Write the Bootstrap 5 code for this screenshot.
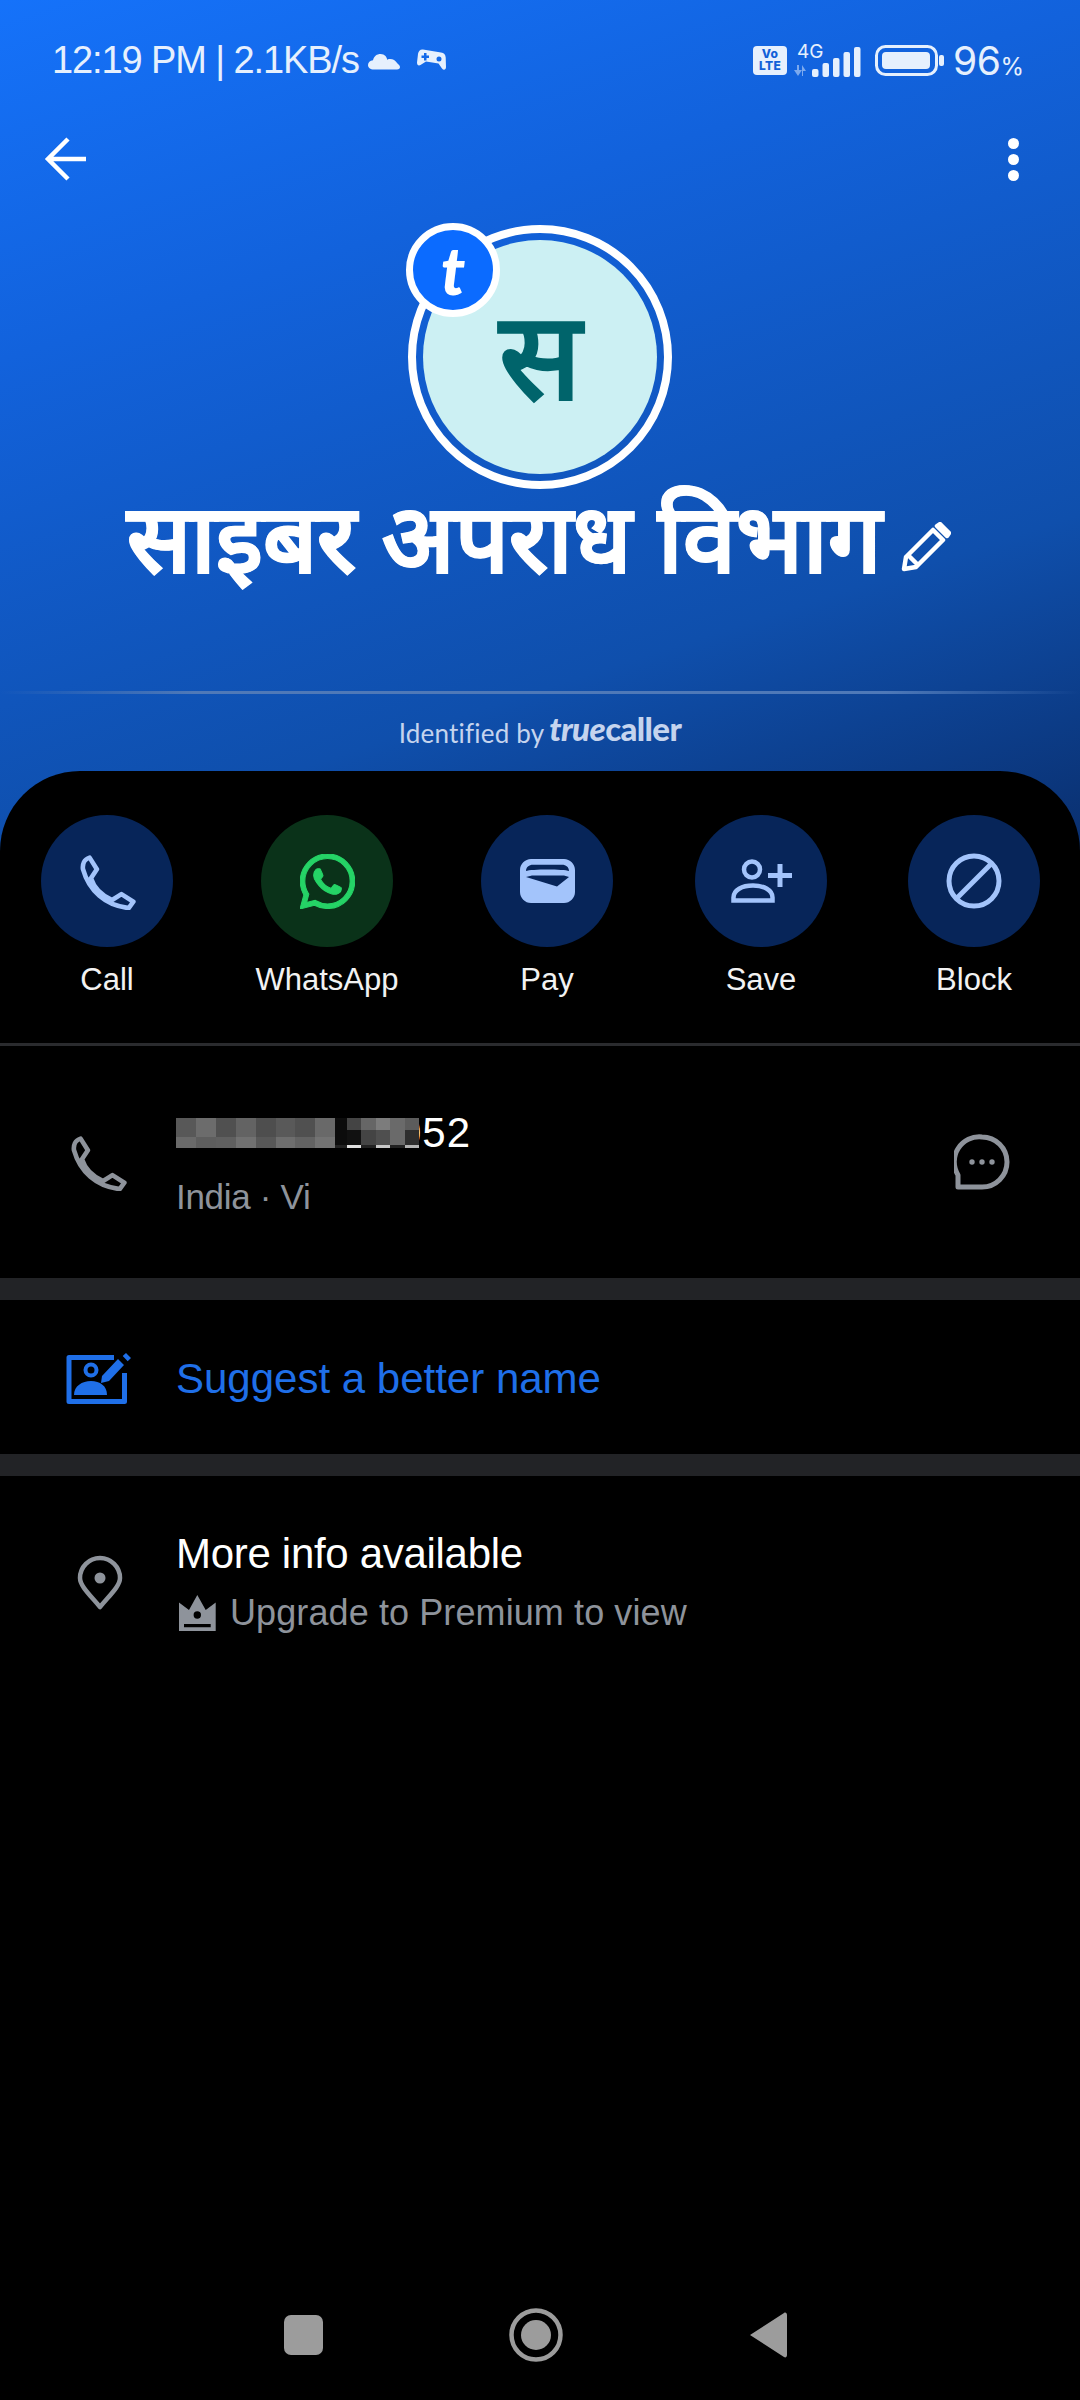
<!DOCTYPE html>
<html lang="en">
<head>
  <meta charset="UTF-8" />
  <meta name="viewport" content="width=device-width, initial-scale=1" />
  <title>Caller details</title>
  <link href="https://cdn.jsdelivr.net/npm/bootstrap@5.3.0/dist/css/bootstrap.min.css" rel="stylesheet" />
  <style>
    body {
      margin: 0;
      width: 1080px;
      height: 2400px;
      background: #000;
      color: #fff;
      font-family: "Liberation Sans", Arial, sans-serif;
      overflow: hidden;
    }

    .hero {
      height: 851px;
      background: linear-gradient(162deg, #1572fa 0%, #1262dc 30%, #0f4fac 72%, #0a2f6e 100%);
    }

    .status-bar {
      height: 120px;
      padding: 0 56px 0 52px;
      color: #e6f0fd;
    }

    .status-time { font-size: 38px; letter-spacing: -1.1px; line-height: 1; }
    .status-batt { font: 39px/1 Inter, sans-serif; letter-spacing: -.5px; }
    .status-batt span { font-size: 24px; letter-spacing: 0; }

    .volte {
      width: 34px;
      height: 29px;
      border-radius: 4px;
      background: #e6f0fd;
      color: #1260d8;
      font-family: Inter, sans-serif;
      font-size: 12px;
      font-weight: 800;
      line-height: 12.5px;
      text-align: center;
      padding-top: 2px;
      letter-spacing: .3px;
    }

    .net-box { width: 68px; height: 29px; margin-left: 6px; }
    .net-4g { font: 19px/1 Inter, sans-serif; position: absolute; left: 4px; top: -4px; }
    .batt-icon { margin-left: 14px; }

    .tool-bar { height: 78px; padding: 0 61px 0 44px; }
    .more-dots i { display: block; width: 11px; height: 11px; border-radius: 50%; background: #fff; margin: 5px 0; }

    .avatar-ring {
      position: relative;
      width: 264px;
      height: 264px;
      margin: 27px auto 0;
      border: 8px solid #fff;
      border-radius: 50%;
      padding: 7px;
    }

    .avatar-fill {
      width: 100%;
      height: 100%;
      border-radius: 50%;
      background: #ccf0f3;
      color: #00646b;
      font-size: 122px;
      font-weight: 700;
      line-height: 1;
    }

    .tc-badge {
      position: absolute;
      left: -10px;
      top: -10px;
      width: 94px;
      height: 94px;
      border: 7px solid #fff;
      border-radius: 50%;
      background: #0b6bff;
      font: italic 900 66px/1 Lato, sans-serif;
    }

    .name-row { height: 101px; padding-left: 127px; }
    .name-text { font-size: 95px; font-weight: 700; line-height: 1; -webkit-text-stroke: 1px #fff; }
    .name-pen { margin: 14px 0 0 20px; }

    .hero-rule {
      height: 3px;
      margin-top: 101px;
      background: linear-gradient(90deg, transparent, #4f79b8 18%, #4f79b8 82%, transparent);
    }

    .identified { height: 78px; color: #c5d4ee; font: 26px Lato, sans-serif; letter-spacing: .2px; }
    .tc-logo { font-size: 33px; font-weight: 900; letter-spacing: -.6px; margin-left: 5px; line-height: 1; position: relative; top: -5px; }
    .tc-logo em { font-style: italic; }

    .sheet {
      position: relative;
      margin-top: -80px;
      background: #000;
      border-radius: 80px 80px 0 0;
    }

    .action-grid {
      display: grid;
      grid-template-columns: 220px 220px 214px 213px 132px;
      padding: 44px 0 0 41px;
      height: 275px;
      border-bottom: 3px solid #2a2b2e;
    }

    .act-circle { width: 132px; height: 132px; border-radius: 50%; background: #072559; }
    .act-circle.green { background: #0a3219; }
    .act-label { width: 172px; margin: 13px 0 0 -20px; text-align: center; font-size: 31px; line-height: 40px; color: #f2f2f2; }

    .row-icon { width: 176px; flex: none; padding-left: 66px; }
    .phone-row { height: 232px; padding: 0 70px 0 0; }
    .phone-text { padding-top: 5px; }
    .main-line { font-size: 42px; line-height: 48px; }
    .sub-line { font-size: 36px; line-height: 44px; color: #8e939b; }
    .carrier-line { font-size: 35px; letter-spacing: -.3px; }
    .num-line { height: 46px; margin-bottom: 19px; }
    .num-mask { position: relative; z-index: 1; }
    .num-end { margin-left: -21px; font-size: 42px; line-height: 46px; letter-spacing: 1px; }

    .band { height: 22px; background: #222326; }
    .suggest-row { height: 154px; padding-top: 4px; }
    .suggest-text { color: #1f6fe8; }
    .info-row { padding-top: 54px; }
    .info-title { letter-spacing: -.3px; }
    .pin-icon { margin-left: 11px; }
    .upgrade-line { margin-top: 13px; letter-spacing: .1px; }
    .crown-icon { margin: 0 14px 0 3px; }

    .nav-keys { position: absolute; left: 0; right: 0; top: 2308px; height: 54px; }
  </style>
</head>
<body>
  <div class="hero">
    <!-- status bar -->
    <div class="status-bar d-flex align-items-center justify-content-between">
      <div class="d-flex align-items-center">
        <span class="status-time">12:19 PM | 2.1KB/s</span>
        <svg class="ms-2" width="34" height="20" viewBox="0 0 34 20"><path fill="#e6f0fd" d="M7 19.500C3 19.500 1 17.500 1 15c0-2.500 2-4.500 5-4.700C7 6 10 4 13.500 4c2.200 0 3.800.8 5 2 1 1.400 1.500 2.500 1.700 3.700 1-.6 2-.7 3-.7 3 .1 5 1.200 7.300 4.500 1.500 1.200 2.500 2.500 2.500 3.500 0 1.500-1 2.500-3 2.500z"/></svg>
        <svg class="ms-3" width="30" height="24" viewBox="0 0 30 24"><path fill="#e6f0fd" fill-rule="evenodd" d="M6 1.500 24 4.500c3 .5 4.500 2 4.700 5L29 19c0 3-2.500 3.500-4 1.500l-3.500-5L9 13.500 3.500 17C1.500 18 0 17 0 14.500L1 6c.4-3 2.500-5 5-4.500zM7 5v2.500H4.500v2.500H7v2.500h2.500V10H12V7.500H9.500V5zM22 8.500a2.500 2.500 0 1 0 0 5 2.500 2.500 0 0 0 0-5z"/></svg>
      </div>
      <div class="d-flex align-items-center">
        <div class="volte">Vo<br />LTE</div>
        <div class="net-box position-relative">
          <span class="net-4g">4G</span>
          <svg class="position-absolute top-0 start-0" width="68" height="32" viewBox="0 0 68 32">
            <path fill="#e6f0fd" opacity=".5" d="M1 24h3v-5h2v5h3l-4 6zM10 25h3l-4-6v11h1z"/>
            <g fill="#e6f0fd">
              <rect x="19" y="23" width="6.500" height="8" rx="2"/>
              <rect x="29.500" y="17" width="6.500" height="14" rx="2"/>
              <rect x="40" y="12" width="6.500" height="19" rx="2"/>
              <rect x="50.500" y="6" width="6.500" height="25" rx="2"/>
              <rect x="61" y="1" width="6.500" height="30" rx="2"/>
            </g>
          </svg>
        </div>
        <svg class="batt-icon" width="70" height="31" viewBox="0 0 70 31">
          <rect x="1.500" y="1.500" width="60" height="28" rx="9" fill="none" stroke="#e6f0fd" stroke-width="3"/>
          <rect x="7" y="7" width="48" height="17" rx="4" fill="#e6f0fd"/>
          <rect x="64" y="10" width="5" height="11" rx="2" fill="#e6f0fd"/>
        </svg>
        <span class="status-batt ms-2">96<span>%</span></span>
      </div>
    </div>

    <!-- back and menu -->
    <div class="tool-bar d-flex align-items-center justify-content-between">
      <svg width="42" height="44" viewBox="0 0 42 44"><path fill="none" stroke="#fff" stroke-width="4.500" d="M42 22H4M24 2 4 22l20 20"/></svg>
      <div class="more-dots"><i></i><i></i><i></i></div>
    </div>

    <!-- avatar -->
    <div class="avatar-ring">
      <div class="avatar-fill d-flex align-items-center justify-content-center">स</div>
      <div class="tc-badge d-flex align-items-center justify-content-center">t</div>
    </div>

    <div class="name-row d-flex align-items-center">
      <span class="name-text">साइबर अपराध विभाग</span>
      <svg class="name-pen" width="50" height="50" viewBox="0 0 50 50"><path fill="none" stroke="#fff" stroke-width="4.500" stroke-linejoin="round" d="M3 47 5 35 32 8l10 10-27 27zM7 33l10 10M36 4l3-2 9 9-2 3z"/></svg>
    </div>

    <div class="hero-rule"></div>
    <div class="identified d-flex align-items-center justify-content-center">
      Identified by <span class="tc-logo"><em>true</em>caller</span>
    </div>
  </div>

  <div class="sheet">
    <!-- actions -->
    <div class="action-grid">
      <div>
        <div class="act-circle d-flex align-items-center justify-content-center">
          <svg width="57" height="57" viewBox="30 36 172 172"><path fill="none" stroke="#a3c4fb" stroke-width="14" stroke-linejoin="round" d="M62 50 84 85 66 112C75 140 100 165 130 178L158 160 194 183 180 202C110 195 60 150 42 85 40 70 45 55 62 50Z"/></svg>
        </div>
        <div class="act-label">Call</div>
      </div>
      <div>
        <div class="act-circle green d-flex align-items-center justify-content-center">
          <svg width="55" height="55" viewBox="0 0 16 16"><path fill="#25d366" stroke="#25d366" stroke-width=".3" d="M13.601 2.326A7.854 7.854 0 0 0 7.994 0C3.627 0 .068 3.558.064 7.926c0 1.399.366 2.760 1.057 3.965L0 16l4.204-1.102a7.933 7.933 0 0 0 3.790.965h.004c4.368 0 7.926-3.558 7.930-7.930A7.898 7.898 0 0 0 13.600 2.326zM7.994 14.521a6.573 6.573 0 0 1-3.356-.920l-.240-.144-2.494.654.666-2.433-.156-.251a6.560 6.560 0 0 1-1.007-3.505c0-3.626 2.957-6.584 6.591-6.584a6.560 6.560 0 0 1 4.660 1.931 6.557 6.557 0 0 1 1.928 4.660c-.004 3.639-2.961 6.592-6.592 6.592zm3.615-4.934c-.197-.099-1.170-.578-1.353-.646-.182-.065-.315-.099-.445.099-.133.197-.513.646-.627.775-.114.133-.232.148-.430.050-.197-.100-.836-.308-1.592-.985-.590-.525-.985-1.175-1.103-1.372-.114-.198-.011-.304.088-.403.087-.088.197-.232.296-.346.100-.114.133-.198.198-.330.065-.134.034-.248-.015-.347-.050-.099-.445-1.076-.612-1.470-.160-.389-.323-.335-.445-.340-.114-.007-.247-.007-.380-.007a.729.729 0 0 0-.529.247c-.182.198-.691.677-.691 1.654 0 .977.710 1.916.810 2.049.098.133 1.394 2.132 3.383 2.992.470.205.840.326 1.129.418.475.152.904.129 1.246.080.380-.058 1.171-.480 1.338-.943.164-.464.164-.860.114-.943-.049-.084-.182-.133-.380-.232z"/></svg>
        </div>
        <div class="act-label">WhatsApp</div>
      </div>
      <div>
        <div class="act-circle d-flex align-items-center justify-content-center">
          <svg width="55" height="44" viewBox="0 0 55 44"><path fill="#a3c4fb" fill-rule="evenodd" d="M11 0h33c6 0 11 5 11 11v22c0 6-5 11-11 11H11C5 44 0 39 0 33V11C0 5 5 0 11 0zM6 12C11 10 44 10 49 12 49 8 46 5.700 42 5.700H13C9 5.700 6 8 6 12zM6 18 12 16.500H44L49 18 37 27.500z"/></svg>
        </div>
        <div class="act-label">Pay</div>
      </div>
      <div>
        <div class="act-circle d-flex align-items-center justify-content-center">
          <svg width="62" height="44" viewBox="0 0 62 44"><g fill="none" stroke="#a3c4fb"><circle cx="22" cy="10.500" r="8" stroke-width="4.500"/><path stroke-width="4.500" d="M3.500 41.500v-3C3.500 31 12 26.500 23 26.500s19.500 4.500 19.500 12v3z"/><path stroke-width="5" d="M38 16.500h24M50 5v23"/></g></svg>
        </div>
        <div class="act-label">Save</div>
      </div>
      <div>
        <div class="act-circle d-flex align-items-center justify-content-center">
          <svg width="56" height="56" viewBox="0 0 56 56"><g fill="none" stroke="#a3c4fb" stroke-width="5"><circle cx="28" cy="28" r="25"/><path d="M10 46 46 10"/></g></svg>
        </div>
        <div class="act-label">Block</div>
      </div>
    </div>

    <!-- number -->
    <div class="phone-row d-flex align-items-center justify-content-between">
      <div class="d-flex align-items-center">
        <div class="row-icon d-flex">
          <svg class="ms-1" width="57" height="57" viewBox="30 36 172 172"><path fill="none" stroke="#8e939b" stroke-width="14" stroke-linejoin="round" d="M62 50 84 85 66 112C75 140 100 165 130 178L158 160 194 183 180 202C110 195 60 150 42 85 40 70 45 55 62 50Z"/></svg>
        </div>
        <div class="phone-text">
          <div class="num-line d-flex align-items-center">
            <svg class="num-mask" width="243" height="30" viewBox="0 0 243 30" shape-rendering="crispEdges">
              <g id="maskTiles"></g>
            </svg>
            <span class="num-end">052</span>
          </div>
          <div class="sub-line carrier-line">India · Vi</div>
        </div>
      </div>
      <svg width="56" height="56" viewBox="0 0 56 56"><path fill="none" stroke="#8e939b" stroke-width="5" stroke-linejoin="round" d="M28 3a25 25 0 1 1 0 50H4v-12A25 25 0 0 1 28 3z"/><g fill="#8e939b"><circle cx="18" cy="28" r="2.700"/><circle cx="28" cy="28" r="2.700"/><circle cx="38" cy="28" r="2.700"/></g></svg>
    </div>

    <div class="band"></div>

    <!-- suggest -->
    <div class="suggest-row d-flex align-items-center">
      <div class="row-icon d-flex">
        <svg width="66" height="54" viewBox="0 0 66 54"><g fill="#1f6fe8"><path fill="none" stroke="#1f6fe8" stroke-width="5" stroke-linejoin="round" d="M48 5.500H3V49.500H58.500V21"/><circle cx="25" cy="18" r="5.500" fill="none" stroke="#1f6fe8" stroke-width="4"/><path d="M8 43C8 34 16 29 25 29 34 29 41 34 41 43z"/><path d="M36 24 52 7 58 13 43 29 35 31zM56.700 4 60 1 65 6 61.700 9.300z"/></g></svg>
      </div>
      <div class="main-line suggest-text">Suggest a better name</div>
    </div>

    <div class="band"></div>

    <!-- more info -->
    <div class="info-row d-flex">
      <div class="row-icon d-flex align-items-center">
        <svg class="pin-icon" width="46" height="56" viewBox="0 0 46 56"><path fill="none" stroke="#8e939b" stroke-width="4.500" stroke-linejoin="round" d="M23 52C13 40 3 31 3 23a20 20 0 0 1 40 0c0 8-10 17-20 29z"/><circle cx="23" cy="23" r="5.500" fill="#8e939b"/></svg>
      </div>
      <div>
        <div class="main-line info-title">More info available</div>
        <div class="sub-line upgrade-line d-flex align-items-center">
          <svg class="crown-icon" width="37" height="36" viewBox="0 0 37 36"><path fill="#8e939b" fill-rule="evenodd" d="M0 7.600 10 15 18.300 0 26.700 15 36.700 7.600V36H0zM18.300 16.300a3.700 3.700 0 1 0 0 7.400 3.700 3.700 0 0 0 0-7.400zM5 29v3.300H31.700V29z"/></svg>
          Upgrade to Premium to view
        </div>
      </div>
    </div>
  </div>

  <!-- nav keys -->
  <div class="nav-keys">
    <svg width="1080" height="54" viewBox="0 0 1080 54">
      <rect x="284" y="7" width="39" height="40" rx="7" fill="#9c9c9c"/>
      <circle cx="536" cy="27" r="24.500" fill="none" stroke="#9c9c9c" stroke-width="4.500"/>
      <circle cx="536" cy="27" r="15" fill="#9c9c9c"/>
      <path d="M750 27 784 5c1.500-1 3 0 3 2v40c0 2-1.500 3-3 2z" fill="#9c9c9c"/>
    </svg>
  </div>

  <script src="https://cdn.jsdelivr.net/npm/bootstrap@5.3.0/dist/js/bootstrap.bundle.min.js"></script>
  <script>
    // pixelated phone number mask
    const rowA = ["#585858","#6c6c6c","#505050","#636363","#4e4e4e","#595959","#505050","#696969"];
    const rowB = ["#6a6a6a","#5e5e5e","#606060","#717171","#585858","#6e6e6e","#636363","#737373"];
    const endA = ["#444444","#666666","#7c7c7c","#6a6a6a","#5c5c5c"];
    const endB = ["#111111","#444444","#4f4f4f","#6a6a6a","#2e2e2e"];
    const endC = ["#e0e0e0","#222222","#c8c8c8","#222222","#b4b4b4"];
    const tile = (x, y, w, h, c) => `<rect x="${x}" y="${y}" width="${w}" height="${h}" fill="${c}"/>`;
    let out = "";
    rowA.forEach((c, i) => {
      out += tile(i * 19.9, 0, 20, 19, c);
      out += tile(i * 19.9, 19, 20, 11, rowB[i]);
    });
    out += tile(159, 0, 12, 27, "#0c0c0c") + tile(159, 27, 12, 3, "#222222");
    endA.forEach((c, i) => {
      const x = 171 + i * 14.4;
      out += tile(x, 0, 15, 12, c);
      out += tile(x, 12, 15, 15, endB[i]);
      out += tile(x, 27, 15, 3, endC[i]);
    });
    document.getElementById("maskTiles").innerHTML = out;
  </script>
</body>
</html>
